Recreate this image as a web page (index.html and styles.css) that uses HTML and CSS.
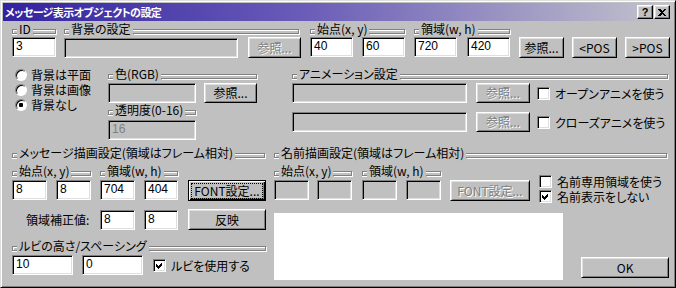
FILE: index.html
```html
<!DOCTYPE html>
<html lang="ja">
<head>
  <meta charset="UTF-8" />
  <title>メッセージ表示オブジェクトの設定</title>
  <link rel="stylesheet" href="styles.css">
</head>
<body>
  <div class="window">
    <!-- タイトルバー -->
    <div class="titlebar">
      <span class="title">メッセージ表示オブジェクトの設定</span>
      <div class="caption-btns">
        <span class="cbtn">?</span>
        <span class="cbtn">
          <svg width="8" height="7" viewBox="0 0 8 7" shape-rendering="crispEdges">
            <path d="M0 0h2l2 2 2-2h2L5 3.5 8 7H6L4 5 2 7H0l3-3.5z" fill="#000"/>
          </svg>
        </span>
      </div>
    </div>

    <div class="client">
      <!-- 1段目：ID・背景・位置 -->
      <div class="row row-top">
        <div class="grp w44">
          <div class="gh"><span class="gh-l"></span><span class="gh-t">ID</span><span class="gh-r"></span></div>
          <div class="ctl"><div class="edit w44">3</div></div>
        </div>
        <div class="grp w237 ml8">
          <div class="gh mr2"><span class="gh-l"></span><span class="gh-t">背景の設定</span><span class="gh-r"></span></div>
          <div class="ctl">
            <div class="edit off w174"></div>
            <div class="btn off w53 ml10">参照...</div>
          </div>
        </div>
        <div class="grp w95 ml9">
          <div class="gh"><span class="gh-l"></span><span class="gh-t">始点(x, y)</span><span class="gh-r"></span></div>
          <div class="ctl">
            <div class="edit w43">40</div>
            <div class="edit w43 ml9">60</div>
          </div>
        </div>
        <div class="grp w96 ml9">
          <div class="gh"><span class="gh-l"></span><span class="gh-t">領域(w, h)</span><span class="gh-r"></span></div>
          <div class="ctl">
            <div class="edit w43">720</div>
            <div class="edit w43 ml10">420</div>
          </div>
        </div>
        <div class="top-btns">
          <div class="btn w45">参照...</div>
          <div class="btn w45">&lt;POS</div>
          <div class="btn w45">&gt;POS</div>
        </div>
      </div>

      <!-- 2段目：背景の種類・色・アニメーション -->
      <div class="row row-bg">
        <div class="radios">
          <div class="radio"><span class="rb"></span>背景は平面</div>
          <div class="radio"><span class="rb"></span>背景は画像</div>
          <div class="radio"><span class="rb"><span class="dot"></span></span>背景なし</div>
        </div>
        <div class="grp w149">
          <div class="gh"><span class="gh-l"></span><span class="gh-t">色(RGB)</span><span class="gh-r"></span></div>
          <div class="ctl mt2">
            <div class="edit off w88"></div>
            <div class="btn h20 w53 ml8">参照...</div>
          </div>
          <div class="gh w88"><span class="gh-l"></span><span class="gh-t">透明度(0-16)</span><span class="gh-r"></span></div>
          <div class="ctl mt3"><div class="edit off w88">16</div></div>
        </div>
        <div class="grp w376 ml35">
          <div class="gh"><span class="gh-l"></span><span class="gh-t">アニメーション設定</span><span class="gh-r"></span></div>
          <div class="ctl mt2">
            <div class="edit off w175"></div>
            <div class="btn off h20 w54 ml9">参照...</div>
            <label class="check ml7"><span class="cb"></span>オープンアニメを使う</label>
          </div>
          <div class="ctl mt9">
            <div class="edit off w175"></div>
            <div class="btn off h20 w54 ml9">参照...</div>
            <label class="check ml7"><span class="cb"></span>クローズアニメを使う</label>
          </div>
        </div>
      </div>

      <!-- 3段目：描画設定 -->
      <div class="row row-draw">
        <div class="col-msg">
          <div class="gh mr1"><span class="gh-l"></span><span class="gh-t">メッセージ描画設定(領域はフレーム相対)</span><span class="gh-r"></span></div>
          <div class="sub">
            <div class="grp w79">
              <div class="gh"><span class="gh-l"></span><span class="gh-t">始点(x, y)</span><span class="gh-r"></span></div>
              <div class="ctl mt2">
                <div class="edit w35">8</div>
                <div class="edit w35 ml9">8</div>
              </div>
            </div>
            <div class="grp w78 ml9">
              <div class="gh"><span class="gh-l"></span><span class="gh-t">領域(w, h)</span><span class="gh-r"></span></div>
              <div class="ctl mt2">
                <div class="edit w35">704</div>
                <div class="edit w34 ml9">404</div>
              </div>
            </div>
            <div class="btn default w78 ml10 sub-btn"><span class="focus">FONT設定...</span></div>
          </div>
          <div class="adjust">
            <span class="adjust-label">領域補正値:</span>
            <div class="edit w35">8</div>
            <div class="edit w34 ml9">8</div>
            <div class="btn w78 ml10">反映</div>
          </div>
          <div class="gh ruby-head"><span class="gh-l"></span><span class="gh-t">ルビの高さ/スペーシング</span><span class="gh-r"></span></div>
          <div class="ctl mt2">
            <div class="edit w61">10</div>
            <div class="edit w61 ml9">0</div>
            <label class="check ml10"><span class="cb"><svg width="11" height="11" viewBox="0 0 11 11" shape-rendering="crispEdges"><path d="M2 4l2 2 4-4v3l-4 4-2-2z" fill="#000"/></svg></span>ルビを使用する</label>
          </div>
        </div>

        <div class="col-name">
          <div class="gh mr2"><span class="gh-l"></span><span class="gh-t">名前描画設定(領域はフレーム相対)</span><span class="gh-r"></span></div>
          <div class="sub">
            <div class="grp w78">
              <div class="gh"><span class="gh-l"></span><span class="gh-t">始点(x, y)</span><span class="gh-r"></span></div>
              <div class="ctl mt2">
                <div class="edit off w35"></div>
                <div class="edit off w35 ml8"></div>
              </div>
            </div>
            <div class="grp w79 ml10">
              <div class="gh"><span class="gh-l"></span><span class="gh-t">領域(w, h)</span><span class="gh-r"></span></div>
              <div class="ctl mt2">
                <div class="edit off w35"></div>
                <div class="edit off w35 ml9"></div>
              </div>
            </div>
            <div class="btn off w80 ml9 sub-btn">FONT設定...</div>
            <div class="checks">
              <label class="check"><span class="cb"></span>名前専用領域を使う</label>
              <label class="check"><span class="cb"><svg width="11" height="11" viewBox="0 0 11 11" shape-rendering="crispEdges"><path d="M2 4l2 2 4-4v3l-4 4-2-2z" fill="#000"/></svg></span>名前表示をしない</label>
            </div>
          </div>
          <div class="bottom">
            <div class="preview"></div>
            <div class="btn w88 ok">OK</div>
          </div>
        </div>
      </div>
    </div>
  </div>
</body>
</html>
```

FILE: styles.css
```css
* {
  box-sizing: border-box;
}
body {
  margin: 0;
  background-color: #c0c0c0;
  font-family: "Noto Sans CJK JP", "Liberation Sans", sans-serif;
  font-size: 12px;
  font-feature-settings: "palt";
  color: #000;
}
.window {
  width: 676px;
  height: 288px;
  padding: 2px;
  background-color: #c0c0c0;
  border: 1px solid;
  border-color: #dfdfdf #000 #000 #dfdfdf;
  box-shadow: inset 1px 1px 0 #fff, inset -1px -1px 0 #808080;
}
.titlebar {
  height: 18px;
  display: flex;
  align-items: center;
  justify-content: space-between;
  padding: 0 3px 0 2px;
  background: linear-gradient(90deg, #3222a0 0%, #6a5cb8 45%, #c4c4cc 100%);
  color: #fff;
  line-height: 18px;
}
.title {
  font-size: 11px;
  font-weight: bold;
  letter-spacing: -0.6px;
}
.caption-btns {
  display: flex;
  gap: 1px;
}
.cbtn {
  width: 16px;
  height: 14px;
  display: flex;
  align-items: center;
  justify-content: center;
  background-color: #c0c0c0;
  border: 1px solid;
  border-color: #fff #000 #000 #fff;
  box-shadow: inset -1px -1px 0 #808080, inset 1px 1px 0 #dfdfdf;
  color: #000;
  font: bold 11px "Liberation Sans", sans-serif;
}

.client {
  padding: 1px 0 0 9px;
}
.row {
  display: flex;
  align-items: flex-start;
}
.row-bg {
  margin-top: 9px;
}
.row-draw {
  margin-top: 6px;
}

/* グループ見出し（エッチング枠） */
.grp {
  display: flex;
  flex-direction: column;
}
.gh {
  display: flex;
  height: 14px;
  line-height: 14px;
}
.gh-l,
.gh-r {
  height: 5px;
  margin-top: 7px;
  border: 1px solid #808080;
}
.gh-l {
  width: 5px;
  flex: none;
  border-right: 0;
  box-shadow: inset 1px 1px 0 #fff, 0 1px 0 #fff;
}
.gh-r {
  flex: 1;
  border-left: 0;
  box-shadow: inset 0 1px 0 #fff, 1px 1px 0 #fff;
}
.gh-t {
  padding: 0 2px;
  white-space: nowrap;
}

.ctl {
  display: flex;
  align-items: center;
  margin-top: 1px;
}

/* エディット */
.edit {
  height: 20px;
  padding-left: 3px;
  line-height: 17px;
  background-color: #fff;
  border: 1px solid;
  border-color: #808080 #fff #fff #808080;
  box-shadow: inset 1px 1px 0 #000, inset -1px -1px 0 #dfdfdf;
  font-family: "Liberation Sans", sans-serif;
}
.edit.off {
  background-color: #c0c0c0;
  color: #808080;
}

/* ボタン */
.btn {
  height: 21px;
  display: flex;
  align-items: center;
  justify-content: center;
  line-height: 14px;
  background-color: #c0c0c0;
  border: 1px solid;
  border-color: #fff #000 #000 #fff;
  box-shadow: inset 1px 1px 0 #dfdfdf, inset -1px -1px 0 #808080;
  white-space: nowrap;
}
.btn.off {
  color: #808080;
  text-shadow: 1px 1px 0 #fff;
}
.btn.default {
  border-color: #000;
  box-shadow: inset 1px 1px 0 #fff, inset -1px -1px 0 #000, inset -2px -2px 0 #808080;
}
.focus {
  display: flex;
  align-items: center;
  justify-content: center;
  width: calc(100% - 6px);
  height: 14px;
  outline: 1px dotted #000;
}
.h20 {
  height: 20px;
}
.top-btns {
  display: flex;
  gap: 8px;
  margin-left: 9px;
  margin-top: 15px;
}

/* ラジオ・チェック */
.radios {
  width: 93px;
  margin-left: 3px;
}
.radio {
  display: flex;
  align-items: center;
  height: 15px;
  line-height: 15px;
  white-space: nowrap;
}
.rb {
  width: 12px;
  height: 12px;
  margin-right: 4px;
  display: flex;
  align-items: center;
  justify-content: center;
  border-radius: 50%;
  background-color: #fff;
  border: 1px solid;
  border-color: #808080 #fff #fff #808080;
  box-shadow: inset 1px 1px 0 #000;
}
.dot {
  width: 4px;
  height: 4px;
  border-radius: 1px;
  background-color: #000;
}
.check {
  display: flex;
  align-items: center;
  height: 15px;
  line-height: 15px;
  white-space: nowrap;
}
.cb {
  width: 13px;
  height: 13px;
  margin-right: 5px;
  flex: none;
  background-color: #fff;
  border: 1px solid;
  border-color: #808080 #fff #fff #808080;
  box-shadow: inset 1px 1px 0 #000, inset -1px -1px 0 #dfdfdf;
}
.cb svg {
  display: block;
}

/* 描画設定 */
.col-msg {
  width: 254px;
}
.col-name {
  width: 395px;
  margin-left: 8px;
}
.sub {
  display: flex;
  align-items: flex-start;
  margin-top: 4px;
}
.sub-btn {
  margin-top: 16px;
}
.adjust {
  display: flex;
  align-items: center;
  margin-top: 8px;
}
.adjust-label {
  width: 88px;
  padding-left: 14px;
}
.ruby-head {
  margin-top: 9px;
}
.checks {
  margin-left: 9px;
  margin-top: 10px;
}
.bottom {
  display: flex;
  align-items: flex-end;
  margin-top: 9px;
}
.preview {
  width: 290px;
  height: 67px;
  background-color: #fff;
}
.ok {
  margin-left: 18px;
  margin-bottom: 2px;
}

/* 幅・余白 */
.w34 { width: 34px; }
.w35 { width: 35px; }
.w43 { width: 43px; }
.w44 { width: 44px; }
.w45 { width: 45px; }
.w53 { width: 53px; }
.w54 { width: 54px; }
.w61 { width: 61px; }
.w78 { width: 78px; }
.w79 { width: 79px; }
.w80 { width: 80px; }
.w88 { width: 88px; }
.w95 { width: 95px; }
.w96 { width: 96px; }
.w149 { width: 149px; }
.w174 { width: 174px; }
.w175 { width: 175px; }
.w237 { width: 237px; }
.w376 { width: 376px; }
.ml7 { margin-left: 7px; }
.ml8 { margin-left: 8px; }
.ml9 { margin-left: 9px; }
.ml10 { margin-left: 10px; }
.ml35 { margin-left: 35px; }
.mr1 { margin-right: 1px; }
.mr2 { margin-right: 2px; }
.mt2 { margin-top: 2px; }
.mt3 { margin-top: 3px; }
.mt9 { margin-top: 9px; }
```
